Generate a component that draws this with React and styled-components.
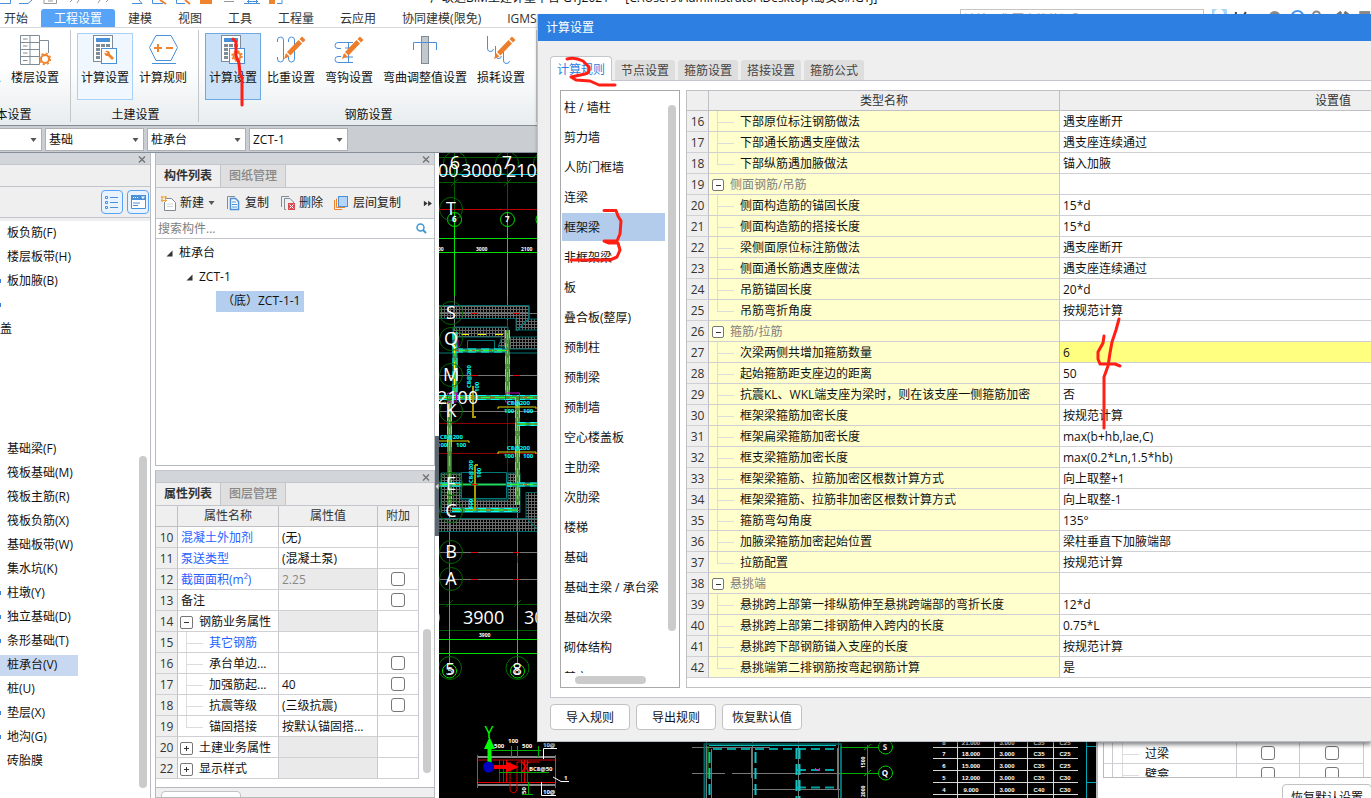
import React from 'react';
import styled, { createGlobalStyle, css } from 'styled-components';

const Global = createGlobalStyle`
  * { box-sizing: border-box; }
  html, body { margin: 0; padding: 0; }
  body {
    font-family: "Open Sans", "Noto Sans CJK SC", sans-serif;
    font-size: 12px;
    line-height: 16px;
    color: #111;
    background: #fff;
    overflow: hidden;
  }
  button, input, select { font: inherit; color: inherit; }
  button { padding: 0; margin: 0; cursor: default; }
`;

const App = styled.div`
  position: relative;
  display: flex;
  flex-direction: column;
  width: 100%;
  height: 100vh;
  overflow: hidden;
`;

/* ---------- Title strip and menu ---------- */
const TitleStrip = styled.header`
  display: flex;
  align-items: flex-end;
  flex: none;
  height: 9px;
  overflow: hidden;
  white-space: pre;
`;
const QuickIcons = styled.div`
  display: flex;
  flex: none;
  width: 430px;
  height: 9px;
`;
const AppTitle = styled.span`
  line-height: 18px;
  padding-bottom: 2px;
`;
const MenuBar = styled.div`
  display: flex;
  flex: none;
  height: 19px;
  border-bottom: 1px solid #d5d7da;
  overflow: hidden;
`;
const MenuTabs = styled.nav`
  display: flex;
  margin-left: -9px;
  flex: 1;
`;
const MenuTab = styled.button`
  border: 0;
  padding: 0 13px;
  height: 19px;
  line-height: 19px;
  white-space: nowrap;
  border-radius: 3px 3px 0 0;
  background: ${p => (p.$active ? '#57a3f7' : 'transparent')};
  color: ${p => (p.$active ? '#fff' : '#333')};
`;
const MenuTools = styled.div`
  display: flex;
  flex: none;
  width: 411px;
  gap: 8px;
`;
const HelpSearch = styled.input`
  width: 245px;
  height: 20px;
  border: 1px solid #c4c4c4;
  padding: 0 3px;
  line-height: 16px;
  outline: 0;
  &::placeholder { color: #aaa; }
`;

/* ---------- Ribbon ---------- */
const Ribbon = styled.section`
  display: flex;
  flex: none;
  height: 98px;
  padding-top: 2px;
  background: linear-gradient(#fff 0%, #fff 40%, #e7ecee 100%);
  border-bottom: 1px solid #858b92;
`;
const RibbonGroup = styled.div`
  display: flex;
  flex-direction: column;
  flex: none;
  margin-left: ${p => (p.$clipped ? '-57px' : '0')};
  padding: 3px 7px 0 6px;
  border-right: 1px solid #c3c7ca;
  height: 92px;
`;
const RibbonItems = styled.div`
  display: flex;
  gap: 2px;
`;
const RibbonButton = styled.button`
  display: flex;
  flex-direction: column;
  align-items: center;
  gap: 4px;
  width: ${p => (p.$wide ? '92px' : '56px')};
  height: 67px;
  white-space: nowrap;
  border: 1px solid ${p => ({ hover: '#a9d1f8', on: '#6ea9e6' }[p.$state] || 'transparent')};
  background: ${p => ({ hover: '#f0f7ff', on: '#cbe1f8' }[p.$state] || 'transparent')};
`;
const GroupLabel = styled.div`
  text-align: center;
  margin-top: 7px;
  padding-left: 3px;
`;

/* ---------- Combo bar ---------- */
const ComboBar = styled.div`
  display: flex;
  flex: none;
  gap: 3px;
  height: 27px;
  padding-top: 2px;
  margin-left: -57px;
  background: #cacdd2;
  border-bottom: 1px solid #878f98;
`;
const ComboBox = styled.div`
  display: flex;
  align-items: center;
  width: 99px;
  height: 23px;
  padding-right: 4px;
  border: 1px solid #aeb0b4;
  background: #fff;
`;
const Combo = styled.select`
  appearance: none;
  flex: 1;
  min-width: 0;
  height: 20px;
  border: 0;
  outline: 0;
  padding: 0 3px;
  background: transparent;
`;

/* ---------- Work area ---------- */
const Work = styled.main`
  display: flex;
  flex: 1;
  min-height: 0;
`;
const NavPane = styled.aside`
  display: flex;
  flex-direction: column;
  flex: none;
  width: 151px;
  border-right: 1px solid #b9bcc2;
  background: #fff;
`;
const PaneBar = styled.div`
  display: flex;
  flex: none;
  align-items: center;
  justify-content: flex-end;
  height: 12px;
  padding: 1px 4px 0 0;
  background: #d2d5da;
  border-bottom: 1px solid #c2c5ca;
`;
const CloseButton = styled.button`
  display: flex;
  border: 0;
  background: transparent;
`;
const NavHead = styled.div`
  flex: none;
  height: 22px;
  background: #efefef;
  border-bottom: 1px solid #c2c5ca;
`;
const NavTools = styled.div`
  display: flex;
  flex: none;
  align-items: center;
  justify-content: flex-end;
  gap: 4px;
  height: 31px;
  padding-right: 1px;
  background: #efefef;
  border-bottom: 1px solid #c2c5ca;
`;
const ToolToggle = styled.button`
  display: flex;
  align-items: center;
  justify-content: center;
  width: 22px;
  height: 24px;
  border: 1px solid #57a3f7;
  border-radius: 4px;
  background: #e8f3ff;
`;
const NavBody = styled.div`
  display: flex;
  flex: 1;
  min-height: 0;
  border-top: 3px solid #efefef;
  overflow: hidden;
`;
const NavList = styled.ul`
  flex: 1;
  list-style: none;
  margin: 0;
  padding: 0;
`;
const NavItem = styled.li`
  display: flex;
  align-items: center;
  gap: 6px;
  height: 24px;
  white-space: nowrap;
  span {
    display: flex;
    align-items: center;
    height: 21px;
    ${p => p.$selected && css`background: #c7d8f0; padding-right: 21px; box-shadow: -7px 0 #c7d8f0;`}
  }
`;
const NavMark = styled.i`
  flex: none;
  width: 1px;
  height: 4px;
  background: ${p => (p.$on ? '#3d7fd0' : 'transparent')};
`;
const Thumb = styled.div`
  flex: none;
  width: ${p => (p.$horizontal ? '71px' : '8px')};
  height: ${p => (p.$horizontal ? '8px' : 'auto')};
  margin: ${p => p.$inset};
  border-radius: 4px;
  background: #cbcbcb;
`;

const MiddleColumn = styled.div`
  display: flex;
  flex-direction: column;
  flex: none;
  width: 280px;
  margin-left: 4px;
`;
const Pane = styled.section`
  display: flex;
  flex-direction: column;
  flex: none;
  min-height: 0;
  border: 1px solid #b6b9be;
  border-top: 0;
  background: #fff;
`;
const LowerPane = styled(Pane)`
  flex: 1;
  margin-top: 4px;
  border-top: 1px solid #c2c5ca;
`;
const PaneTabs = styled.div`
  display: flex;
  flex: none;
  height: 23px;
  background: #efefef;
  border-bottom: 1px solid #c2c5ca;
`;
const PaneTab = styled.button`
  width: 65px;
  height: 22px;
  border: 0;
  border-right: 1px solid #c2c5ca;
  font-weight: ${p => (p.$active ? '700' : '500')};
  color: ${p => (p.$active ? '#333' : '#888')};
  background: ${p => (p.$active ? '#efefef' : '#dfdfdf')};
`;
const PaneTools = styled.div`
  display: flex;
  flex: none;
  align-items: center;
  height: 31px;
  padding: 0 2px 0 5px;
  background: #efefef;
  border-bottom: 1px solid #c2c5ca;
`;
const PaneTool = styled.button`
  display: flex;
  align-items: center;
  gap: 4px;
  margin-right: 11px;
  border: 0;
  background: transparent;
  color: #222;
  white-space: nowrap;
`;
const SearchRow = styled.label`
  display: flex;
  flex: none;
  align-items: center;
  height: 20px;
  padding-right: 7px;
  border-bottom: 1px solid #c2c5ca;
`;
const SearchInput = styled.input`
  flex: 1;
  min-width: 0;
  border: 0;
  outline: 0;
  padding: 0 2px;
  height: 18px;
  &::placeholder { color: #808080; }
`;
const Tree = styled.div`
  height: 226px;
  padding-top: 2px;
`;
const TreeRow = styled.div`
  display: flex;
  align-items: center;
  gap: 6px;
  height: 24px;
  padding-left: ${p => 10 + p.$depth * 20}px;
`;
const TreeChosen = styled.span`
  padding: 2px 4px 3px 6px;
  background: #b3ceef;
`;
const PropertyArea = styled.div`
  display: flex;
  flex: none;
  background: #fff;
  height: 281px;
`;
const PropertyFooter = styled.div`
  flex: 1;
  min-height: 0;
  padding: 3px 5px;
  background: #efefef;
  border-top: 1px solid #b6b9be;
  overflow: hidden;
`;

/* ---------- Data tables ---------- */
const Grid = styled.table`
  flex: none;
  align-self: flex-start;
  table-layout: fixed;
  border-collapse: separate;
  border-spacing: 0;
  width: ${p => p.$width}px;
  th, td {
    padding: 0;
    border-right: 1px solid #c9c9cf;
    border-bottom: 1px solid #cfcfd4;
    height: 21px;
    overflow: hidden;
    white-space: nowrap;
    font-weight: 400;
    line-height: 18px;
    text-align: left;
  }
  thead th { background: #efefef; color: #333; text-align: center; border-color: #bfbfc4; height: ${p => p.$head}px; }
  tbody th { background: #efefef; color: #333; text-align: center; border-right-color: #bfbfc4; padding-top: 2px; }
`;
const Cell = styled.div`
  display: flex;
  align-items: center;
  height: 20px;
  padding: 2px 0 0 ${p => p.$pad || 3}px;
  color: ${p => p.$tone || '#111'};
`;
const NameCell = styled.td`
  background: ${p => (p.$yellow ? '#ffffce' : '#fff')};
`;
const ValueCell = styled.td`
  background: ${p => ({ locked: '#eaeaea', hot: '#ffff80' }[p.$kind] || '#fff')};
`;
const Guide = styled.span`
  flex: none;
  width: 17px;
  height: 22px;
  margin-right: 6px;
  background:
    linear-gradient(#dcdcdc, #dcdcdc) 0 0 / 1px ${p => (p.$last ? '50%' : '100%')} no-repeat,
    linear-gradient(#dcdcdc, #dcdcdc) 0 50% / 17px 1px no-repeat;
`;
const Expander = styled.button`
  display: flex;
  align-items: center;
  justify-content: center;
  flex: none;
  width: ${p => p.$size}px;
  height: ${p => p.$size}px;
  margin-right: 6px;
  border: 1px solid #777;
  border-radius: 2px;
  background: #fff;
`;
const Tick = styled.input.attrs({ type: 'checkbox' })`
  appearance: none;
  display: block;
  width: 14px;
  height: 14px;
  margin: 0 auto;
  border: 1px solid #777;
  border-radius: 3px;
  background: #fff;
`;

/* ---------- Drawing area ---------- */
const Splitter = styled.div`
  display: flex;
  flex: none;
  width: 4px;
  align-items: flex-start;
  padding-top: 283px;
`;
const SplitterGrip = styled.button`
  display: flex;
  align-items: center;
  width: 4px;
  height: 100px;
  border: 0;
  background: #5c6771;
`;
const Canvas = styled.div`
  flex: 1;
  min-width: 0;
  overflow: hidden;
  background: #000;
  svg { display: block; }
`;
const SidePane = styled.aside`
  display: flex;
  flex-direction: column;
  justify-content: flex-end;
  flex: none;
  width: 275px;
  padding-left: 5px;
  background: #fff;
  border-left: 2px solid #b9b9b9;
  overflow: hidden;
`;
const SideScroll = styled.div`
  display: flex;
  flex: none;
  align-items: flex-start;
  height: 35px;
  border: 1px solid #bbb;
  border-width: 0 0 1px 1px;
  overflow: hidden;
`;
const SideFooter = styled.div`
  display: flex;
  justify-content: flex-end;
  flex: none;
  height: 20px;
  padding-top: 6px;
  margin-right: -1px;
  overflow: hidden;
`;

/* ---------- Dialog ---------- */
const Dialog = styled.section`
  position: absolute;
  top: 14px;
  left: 538px;
  right: 0;
  background: #efefef;
  border-bottom: 1px solid #b8bcc6;
  box-shadow: -1px 0 #b9c2d8, 0 3px 4px rgba(0, 0, 0, 0.45);
  overflow: hidden;
`;
const DialogTitle = styled.h1`
  margin: 0;
  padding-left: 8px;
  height: 27px;
  font-size: 12px;
  line-height: 28px;
  font-weight: 400;
  color: #fff;
  background: #2d7fe1;
`;
const DialogTabs = styled.div`
  display: flex;
  align-items: flex-end;
  gap: 3px;
  padding: 15px 0 0 12px;
`;
const DialogTab = styled.button`
  border: 0;
  width: 60px;
  height: 20px;
  padding-top: 2px;
  color: #444;
  background: #dedede;
  border-radius: 3px 3px 0 0;
  ${p => p.$active && css`
    position: relative;
    z-index: 1;
    width: 62px;
    height: 25px;
    margin-bottom: -1px;
    color: #2d7fe1;
    background: #fff;
    border: 1px solid #c3c6cc;
    border-bottom: 0;
    border-radius: 4px 4px 0 0;
  `}
`;
const DialogPanel = styled.div`
  display: flex;
  gap: 6px;
  margin-left: 12px;
  padding: 9px 0 9px 9px;
  background: #fff;
  border: 1px solid #c3c6cc;
  border-right: 0;
  overflow: hidden;
`;
const RuleBox = styled.div`
  display: flex;
  flex-direction: column;
  flex: none;
  width: 120px;
  height: 598px;
  border: 1px solid #a9a9ac;
`;
const RuleView = styled.div`
  display: flex;
  flex: 1;
  min-height: 0;
  overflow: hidden;
`;
const RuleList = styled.ul`
  display: flex;
  flex-direction: column;
  flex: 1;
  gap: 2px;
  list-style: none;
  margin: 0;
  padding: 2px 1px;
`;
const RuleItem = styled.li`
  flex: none;
  width: 103px;
  height: 28px;
  padding-left: 2px;
  line-height: 29px;
  white-space: nowrap;
  background: ${p => (p.$selected ? '#b3ccec' : 'transparent')};
`;
const RuleTable = styled.div`
  flex: 1;
  min-width: 0;
  border: 1px solid #bfbfc4;
  border-right: 0;
  overflow: hidden;
`;
const DialogFooter = styled.footer`
  display: flex;
  gap: 6px;
  padding: 6px 12px 11px;
`;
const PlainButton = styled.button`
  flex: none;
  width: ${p => p.$width || 80}px;
  height: 26px;
  padding-top: 1px;
  border: 1px solid #c2c2c2;
  border-radius: 4px;
  background: #fff;
  white-space: nowrap;
`;
const Markup = styled.svg`
  position: absolute;
  top: 0;
  left: 0;
  z-index: 2;
  pointer-events: none;
`;

/* ---------- Icons ---------- */
const B = '#4a90d9', O = '#ee8330', G = '#7f8b96';

const Pencil = () => (
  <g fill="#ee7d2b" stroke="none">
    <path d="M9 25 L11 19 L14.500 22.500 Z" />
    <path d="M12 18 L23.500 6 L27 9.500 L15.500 21.500 Z" />
    <path d="M24.500 5 L27 2.500 L30.500 6 L28 8.500 Z" />
  </g>
);
const Calculator = () => (
  <g>
    <rect x="4.500" y="1.500" width="19" height="26" fill="#fff" stroke={G} />
    <rect x="7" y="4" width="14" height="4" fill={B} />
    <g fill={G}>
      {[10, 14, 18, 22].map(y => [7, 12, 17].map(x => <rect key={`${x}${y}`} x={x} y={y} width="4" height="3" />))}
    </g>
    <rect x="12.500" y="14.500" width="15" height="15" fill="#fff" stroke={B} />
  </g>
);
const ribbonArt = {
  info: <rect x="4" y="2" width="20" height="26" fill="none" stroke={G} />,
  floor: (
    <g fill="none" stroke={G}>
      <path d="M1.500 1.500H20.500V30.500H1.500ZM11 1.500V30.500M1.500 8.500H20M1.500 15.500H20M1.500 22.500H20M4 5H8.500M4 12H8.500M4 19H8.500M4 26.500H8.500M20.500 6.500H29.500V19" />
      <circle cx="26" cy="25" r="4" fill="#fff" stroke={O} strokeWidth="2" />
      <circle cx="26" cy="25" r="5.500" stroke={O} strokeWidth="1.500" strokeDasharray="2.100 2.220" />
    </g>
  ),
  calc: (
    <g>
      <Calculator />
      <path d="M16 17.500a3 3 0 0 1 5 2.500l4 4-2 2-4-4a3 3 0 0 1-3.500-3.500l2 1 1-1z" fill={O} />
    </g>
  ),
  calcGear: (
    <g>
      <Calculator />
      <circle cx="20" cy="22" r="3.500" fill="none" stroke={O} strokeWidth="2" />
      <circle cx="20" cy="22" r="5" fill="none" stroke={O} strokeWidth="1.500" strokeDasharray="2 1.930" />
    </g>
  ),
  rule: (
    <g fill="none" stroke={B}>
      <path d="M2.500 13.500L9 1.500H24L30.500 13.500L24 26.500H9ZM5 29.500H29" />
      <path d="M7 14H15M11 10V18M19 14H26" stroke={O} strokeWidth="2" />
    </g>
  ),
  weight: (
    <g fill="none" stroke={B}>
      <path d="M2.500 8V6a3 3 0 0 1 6 0V25a3 3 0 0 1-6 0V23M13.500 8V6a3 3 0 0 1 6 0V25a3 3 0 0 1-6 0V23" />
      <Pencil />
    </g>
  ),
  hook: (
    <g fill="none" stroke={B}>
      <path d="M20 8.500H5a3 3 0 0 0 0 6H8M8 22.500H5a3 3 0 0 0 0 6H20M15.500 8V28M12 14H20M12 23H20" />
      <Pencil />
    </g>
  ),
  bend: (
    <g fill="none" stroke={B}>
      <rect x="12.500" y="2.500" width="7" height="27" fill="#c3c8cc" stroke={G} />
      <path d="M4.500 16V8.500H27.500V16" />
    </g>
  ),
  loss: (
    <g fill="none" stroke={B}>
      <path d="M2.500 2V14a3 3 0 0 0 6 1M10.500 12V21a3 3 0 0 0 6 1M18.500 18V26a3 3 0 0 0 6 1" />
      <Pencil />
    </g>
  ),
};
const RibbonIcon = ({ name }) => <svg width="32" height="32" viewBox="0 0 32 32" aria-hidden="true">{ribbonArt[name]}</svg>;
const Down = () => <svg width="7" height="4" viewBox="0 0 7 4" aria-hidden="true"><path d="M0.500 0H6.500L3.500 4Z" fill="#555" /></svg>;
const CloseIcon = () => <svg width="8" height="7" viewBox="0 0 8 7"><path d="M1 0.500L7 6.500M7 0.500L1 6.500" stroke="#777" strokeWidth="1.500" /></svg>;

const toolArt = {
  add: <g><path d="M4.500 2.500H10.500L14.500 6.500V14.500H3.500V6" fill="#fff" stroke={G} /><path d="M6 8H12M6 10.500H12" stroke="#cfd4d8" /><path d="M0 1H6M0 4.500H6M1 0V6M4.500 0V6" stroke="#f0a23c" strokeWidth="1.200" /></g>,
  copy: <g fill="none"><path d="M1.500 13V0.500H9" stroke={G} /><path d="M4.500 2.500H9.500L12.500 5.500V13.500H4.500Z" fill="#fff" stroke={B} strokeWidth="1.500" /><path d="M6 6H10M6 8.500H11M6 11H11" stroke={B} /></g>,
  remove: <g fill="none"><path d="M1.500 11V0.500H9M6 13.500H4.500V2.500H10L13.500 6V7" stroke={G} /><rect x="8" y="7" width="7" height="7" fill="#d84b50" /><path d="M9.500 8.500L13.500 12.500M13.500 8.500L9.500 12.500" stroke="#fff" /></g>,
  layers: <g fill="none"><path d="M0.500 4V13.500H8M2.500 2.500V11.500H11" stroke={O} /><rect x="4.500" y="0.500" width="9" height="10" fill="#b6d5fb" stroke={B} /></g>,
};
const ToolIcon = ({ name }) => <svg width="15" height="15" viewBox="0 0 15 15" aria-hidden="true">{toolArt[name]}</svg>;
const Sign = ({ plus }) => <svg width="7" height="7" viewBox="0 0 7 7"><path d={plus ? 'M1 3.500H6M3.500 1V6' : 'M1 3.500H6'} stroke="#333" /></svg>;

/* ---------- Data ---------- */
const menus = ['开始', '工程设置', '建模', '视图', '工具', '工程量', '云应用', '协同建模(限免)', 'IGMS'];
const ribbon = [
  { label: '基本设置', clipped: true, items: [['info', '工程信息'], ['floor', '楼层设置']] },
  { label: '土建设置', items: [['calc', '计算设置', 'hover'], ['rule', '计算规则']] },
  { label: '钢筋设置', items: [['calcGear', '计算设置', 'on'], ['weight', '比重设置'], ['hook', '弯钩设置'], ['bend', '弯曲调整值设置', '', true], ['loss', '损耗设置']] },
];
const navItems = [
  ['板负筋(F)'], ['楼层板带(H)'], ['板加腋(B)', 1], ['', 1], ['盖'], [''], [''], [''], [''],
  ['基础梁(F)'], ['筏板基础(M)'], ['筏板主筋(R)'], ['筏板负筋(X)'], ['基础板带(W)'], ['集水坑(K)'],
  ['柱墩(Y)', 1], ['独立基础(D)', 1], ['条形基础(T)', 1], ['桩承台(V)'], ['桩(U)'], ['垫层(X)', 1], ['地沟(G)', 1], ['砖胎膜'],
];
const props = [
  { n: 10, name: '混凝土外加剂', value: '(无)', blue: true },
  { n: 11, name: '泵送类型', value: '(混凝土泵)', blue: true },
  { n: 12, name: '截面面积(m²)', value: '2.25', blue: true, locked: true, tick: true },
  { n: 13, name: '备注', tick: true },
  { n: 14, name: '钢筋业务属性', group: 'open', locked: true },
  { n: 15, name: '其它钢筋', blue: true, child: true },
  { n: 16, name: '承台单边...', child: true, tick: true },
  { n: 17, name: '加强筋起...', value: '40', child: true, tick: true },
  { n: 18, name: '抗震等级', value: '(三级抗震)', child: true, tick: true },
  { n: 19, name: '锚固搭接', value: '按默认锚固搭...', child: true, last: true },
  { n: 20, name: '土建业务属性', group: 'shut', locked: true },
  { n: 22, name: '显示样式', group: 'shut', locked: true },
];
const ruleKinds = ['柱 / 墙柱', '剪力墙', '人防门框墙', '连梁', '框架梁', '非框架梁', '板', '叠合板(整厚)', '预制柱', '预制梁', '预制墙', '空心楼盖板', '主肋梁', '次肋梁', '楼梯', '基础', '基础主梁 / 承台梁', '基础次梁', '砌体结构', '其它'];
const rules = [
  ['下部原位标注钢筋做法', '遇支座断开'], ['下部通长筋遇支座做法', '遇支座连续通过'], ['下部纵筋遇加腋做法', '锚入加腋'],
  ['侧面钢筋/吊筋'],
  ['侧面构造筋的锚固长度', '15*d'], ['侧面构造筋的搭接长度', '15*d'], ['梁侧面原位标注筋做法', '遇支座断开'],
  ['侧面通长筋遇支座做法', '遇支座连续通过'], ['吊筋锚固长度', '20*d'], ['吊筋弯折角度', '按规范计算'],
  ['箍筋/拉筋'],
  ['次梁两侧共增加箍筋数量', '6'], ['起始箍筋距支座边的距离', '50'], ['抗震KL、WKL端支座为梁时，则在该支座一侧箍筋加密', '否'],
  ['框架梁箍筋加密长度', '按规范计算'], ['框架扁梁箍筋加密长度', 'max(b+hb,lae,C)'], ['框支梁箍筋加密长度', 'max(0.2*Ln,1.5*hb)'],
  ['框架梁箍筋、拉筋加密区根数计算方式', '向上取整+1'], ['框架梁箍筋、拉筋非加密区根数计算方式', '向上取整-1'],
  ['箍筋弯勾角度', '135°'], ['加腋梁箍筋加密起始位置', '梁柱垂直下加腋端部'], ['拉筋配置', '按规范计算'],
  ['悬挑端'],
  ['悬挑跨上部第一排纵筋伸至悬挑跨端部的弯折长度', '12*d'], ['悬挑跨上部第二排钢筋伸入跨内的长度', '0.75*L'],
  ['悬挑跨下部钢筋锚入支座的长度', '按规范计算'], ['悬挑端第二排钢筋按弯起钢筋计算', '是'],
];

/* ---------- CAD drawing ---------- */
const axisMarks = [['6', 455, 163], ['7', 507, 163], ['8', 545, 163], ['T', 451, 209], ['S', 451, 313], ['Q', 451, 339], ['M', 451, 375], ['K', 451, 411], ['E', 451, 484], ['C', 451, 511], ['B', 451, 552], ['A', 451, 579]];
const levels = [['8', '21.000', '3.000', 'C35', 'C25', 742], ['7', '18.000', '3.000', 'C35', 'C25', 753], ['6', '15.000', '3.000', 'C35', 'C25', 765], ['5', '12.000', '3.000', 'C35', 'C30', 777], ['4', '9.000', '3.000', 'C40', 'C30', 789], ['3', '6.000', '3.000', 'C40', 'C30', 800]];
const Beam = ({ d, w = 5 }) => (
  <g fill="none">
    <path d={d} stroke="#00a8a8" strokeWidth={w} />
    <path d={d} stroke="#00ffff" strokeWidth={w} strokeDasharray="8 5" />
    <path d={d} stroke="#4c8f3c" strokeWidth={w - 2} />
    <path d={d} stroke="#2bff2b" strokeWidth="1" strokeDasharray="10 4" />
    <path d={d} stroke="#b06020" strokeWidth="1" strokeDasharray="3 14" />
  </g>
);
const RebarTag = ({ x, y }) => (
  <g>
    <path d={`M${x} ${y + 2}V${y}H${x + 38}V${y + 2}`} fill="none" stroke="#e0d800" />
    <g fill="#00ffff" fontSize="6" fontWeight="700">
      <text x={x + 9} y={y - 2}>C8@200</text><text x={x + 6} y={y + 6}>100</text><text x={x + 25} y={y + 6}>100</text>
    </g>
  </g>
);
const Drawing = () => (
  <svg width="657" height="645" viewBox="439 153 657 645" fontFamily="Open Sans, sans-serif">
    <defs>
      <pattern id="mesh" width="3" height="3" patternUnits="userSpaceOnUse">
        <path d="M0 0.500H3M0.500 0V3" stroke="#6a6a6a" strokeWidth="1" />
      </pattern>
    </defs>
    <g fill="none" stroke="#005c00">
      <path d="M439 157.500H539M439 182.500H539M454.500 153V217M507.500 153V217M451 186L458 179M504 186L511 179" />
      <path d="M439 604.500H539M439 630.500H539M446 607L453 600M514 607L521 600" />
    </g>
    <path d="M439 174.500H539" stroke="#00c8e8" />
    <path d="M439 209.500H539" stroke="#c00000" />
    <g fill="none" stroke="#00e000">
      <path d="M439 238.500H539M439 252.500H539M454.500 212V296M507.500 212V296M439 639.500H539M439 653.500H539M449.500 596V665M517.500 596V665" />
      <circle cx="454.500" cy="219.500" r="7" /><circle cx="507.500" cy="219.500" r="7" /><circle cx="543" cy="219.500" r="7" />
      <circle cx="449.500" cy="671" r="7" /><circle cx="517.500" cy="671" r="7" />
    </g>
    <g stroke="#777" fill="none">
      <path d="M454.500 296V330M507.500 296V330M439 375.500H539M439 411.500H539M439 552.500H539M439 579.500H539M449.500 512V600M517.500 512V600" />
    </g>
    <g stroke="#8b0000" fill="none"><path d="M439 423.500H539M439 453.500H539M507.500 400V480" /></g>
    <g fill="url(#mesh)" stroke="#006c6c">
      <path d="M439 305.500H529V318L516 331V318.500H439Z" />
      <path d="M529 319H540V330H517Z" />
      <path d="M453 327H508V347H498L502 337H453Z" />
      <path d="M508 337H540V349H508Z" />
      <path d="M439 518.500H540V531.500H439Z" />
      <path d="M441 473H461V500H508V473H520V512.500H441Z" />
      <path d="M526 492.500H540V531H540L526 518Z" />
    </g>
    <path d="M439 313.500H539" stroke="#777" />
    <g fill="none" stroke="#007878"><path d="M467.500 340.500H494.500V350.500H467.500ZM439 353H453M510 353H539M529 306V319L517 331M526 518L539 531" /></g>
    <Beam d="M455 332V397" /><Beam d="M507.500 330V397" /><Beam d="M455 350.500H507" w={4} />
    <path d="M454.500 345V396M461 334.500H505" stroke="#ffff00" strokeDasharray="8 9" />
    <Beam d="M439 397.500H539" /><Beam d="M517.500 397V505" /><Beam d="M449.500 400V505" /><Beam d="M517 424H539" w={4} /><Beam d="M439 484.500H539" w={4} /><Beam d="M452 510H518" w={4} />
    <path d="M461.500 472.500H506.500V498.500H461.500Z" fill="#000" stroke="#007878" />
    <path d="M461 484.500H506" stroke="#20d860" strokeWidth="2" />
    <g fill="none" stroke="#c000c0"><path d="M447.500 393V402H456.500V393ZM505.500 393V402H519.500V393ZM509.500 340V352M447.500 452V480M451.500 452V480M453 340H458V352" /></g>
    <path d="M473 386V416M472 417H476M475 465V510M475 465H478" stroke="#a89c00" fill="none" strokeWidth="2" />
    <g fill="#00ffff" fontSize="6" fontWeight="700">
      <text transform="translate(471 388) rotate(-90)">C8@200</text><text transform="translate(479 392) rotate(-90)">100</text>
      <text transform="translate(473 483) rotate(-90)">C8@200</text><text transform="translate(481 478) rotate(-90)">100</text><text transform="translate(473 509) rotate(-90)">100</text>
    </g>
    <RebarTag x={498} y={407} /><RebarTag x={498} y={452} /><RebarTag x={431} y={441} />
    <path d="M471 313.500H478M513 313.500H520M471 375.500H478M513 375.500H520M471 484.500H478M471 552.500H478M513 552.500H520M471 579.500H478M513 579.500H520M449.500 556V563M517.500 556V563M507.500 320V330" stroke="#e80000" />
    {axisMarks.map(([t, x, y]) => (
      <g key={t}>
        <circle cx={x} cy={y} r="11.500" fill="none" stroke="#006800" />
        <text x={x} y={y + 6} fontSize="18" fill="#fff" textAnchor="middle">{t}</text>
      </g>
    ))}
    <g fill="#fff" fontSize="18">
      <text x="438" y="177">00</text><text x="461" y="177">3000</text><text x="506" y="177">2100</text>
      <text x="437" y="404">2100</text><text x="463" y="624">3900</text><text x="524" y="624">300</text><text x="430" y="624">0</text>
    </g>
    <g fill="#fff" fontSize="5" fontWeight="700">
      <text x="476" y="251">3000</text><text x="521" y="251">2100</text><text x="438" y="251">00</text><text x="479" y="637">3900</text>
      <text x="452" y="222" fontSize="8">6</text><text x="505" y="222" fontSize="8">7</text>
    </g>
    <g fill="none" stroke="#007000"><circle cx="450" cy="668" r="11.500" /><circle cx="517.500" cy="668" r="11.500" /></g>
    <g fill="#fff" textAnchor="middle">
      <text x="450" y="675" fontSize="17">5</text><text x="450" y="674" fontSize="9">5</text>
      <text x="517" y="675" fontSize="17">8</text><text x="517" y="674" fontSize="9">8</text>
    </g>

    {/* section detail with the origin marker */}
    <g fill="none">
      <path d="M477 757H556M477 785H556" stroke="#8a8a8a" strokeWidth="2" />
      <path d="M478 760H555M478 782.500H555M499.500 760V782M503.500 760V782M506.500 760V782M521.500 760V782M524.500 760V782M527.500 760V782M510 762V790Q513 796 517 790V762H539" stroke="#e00000" />
      <path d="M477.500 755V788M555.500 755V788M492 750.500H541M511.500 746V757M517.500 746V757M538.500 746V757M499 772.500H549M528.500 782V795M522 794.500H533" stroke="#00b000" />
      <path d="M557 748.500H543.500V759M541.500 782V795.500H556M553 777L561 781.500H569" stroke="#fff" />
      <path d="M489.500 767V745" stroke="#00ff00" strokeWidth="4" />
      <path d="M494 767H507" stroke="#ff0000" strokeWidth="4" />
    </g>
    <path d="M484 749L489.500 737L495 749Z" fill="#00ff00" /><path d="M506 761.500L519 767L506 772.500Z" fill="#f00" />
    <circle cx="488.500" cy="767" r="5.500" fill="#0000c0" />
    <text x="489" y="738" fontSize="16" fill="#00ff00" textAnchor="middle">Y</text>
    <text x="525" y="772" fontSize="14" fill="#f00" textAnchor="middle">X</text>
    <g fill="#fff" fontSize="6" fontWeight="700">
      <text x="494" y="748">500</text><text x="508" y="743">100</text><text x="522" y="748">500</text><text x="543" y="747">10@</text>
      <text x="529" y="771">BC8@50</text><text x="543" y="794">10@</text><text x="564" y="780">1</text><text transform="translate(526 794) rotate(-90)">50</text>
    </g>

    {/* lower floor plan */}
    <g fill="none">
      <path d="M692 747.500H770M692 773.500H725M732 773.500H840M752 789.500H840M706.500 742V798M752.500 742V798M798.500 742V798M838.500 742V798" stroke="#777" />
      <path d="M704.500 798V744H841V798" stroke="#007070" strokeWidth="2" />
      <path d="M709 745.500H836" stroke="#00e5e5" />
      <path d="M713 749H836M797 770H838M797 787.500H838" stroke="#00a0a0" strokeWidth="2" strokeDasharray="9 5" />
      <path d="M709.500 752V798M755.500 752V798M796.500 748V798M799.500 748V798" stroke="#00caca" strokeDasharray="11 5" strokeWidth="2" />
      <path d="M708 746V778M711.500 749V798M751.500 748V778M837.500 748V790" stroke="#00c800" strokeWidth="1" />
      <path d="M840 747.500H878M840 773.500H878M867.500 745V798M864 750L871 744M864 776L871 770" stroke="#00b000" />
      <circle cx="885.500" cy="747" r="7" stroke="#00d000" /><circle cx="885.500" cy="773" r="7" stroke="#00d000" />
      <path d="M815 768L818 771L820 768" stroke="#e020e0" />
    </g>
    <g fill="#fff" fontSize="8" fontWeight="700" textAnchor="middle"><text x="885" y="750">S</text><text x="885" y="776">Q</text></g>
    <g fill="#fff" fontSize="5" fontWeight="700"><text transform="translate(865 768) rotate(-90)">1500</text><text transform="translate(865 797) rotate(-90)">2000</text></g>

    {/* level schedule */}
    <g fill="none" stroke="#d8d8d8"><path d="M933 747.500H1078M933 758.500H1078M933 770.500H1078M933 782.500H1078M933 794.500H1078M957.500 742V798M994.500 742V798M1027.500 742V798M1053.500 742V798" /></g>
    <g fill="#fff" fontSize="6" fontFamily="Liberation Sans, sans-serif" fontWeight="700" textAnchor="middle">
      {levels.map(([n, h, s, a, b, y]) => (
        <g key={n}><text x="944" y={y + 3}>{n}</text><text x="971" y={y + 3}>{h}</text><text x="1007" y={y + 3}>{s}</text><text x="1039" y={y + 3}>{a}</text><text x="1065" y={y + 3}>{b}</text></g>
      ))}
    </g>
    <path d="M1086.500 742V798M1086 746.500H1096M1086 782.500H1096" stroke="#00a8b8" />
  </svg>
);

const QuickArt = () => (
  <svg width="430" height="9" viewBox="0 0 430 9" fill="none" aria-hidden="true">
    <path d="M0 3.500H10.500V0M19 3.500H28L32 0" stroke={B} />
    <path d="M44 0V3.500H56.500V0M48 1H53M70 2L72 0M77 3L79 0M98 3L100 0M106 2L108 0M224 1.500H234" stroke="#999" />
    <path d="M132 3.500H142L139 0M152.500 0V3.500H163M176.500 0V3.500H185M247 1.500H258M244 3.500H260M248.500 0V4M256.500 0V4" stroke={B} />
    <path d="M160 0L166 4M185 0L190 4M200 3H212M200 1H212" stroke={O} strokeWidth="2" />
    <path d="M269 0H275V4H269Z" fill={O} /><path d="M277 3.500H282V0" stroke={B} />
  </svg>
);
const UserArt = () => (
  <svg width="160" height="19" viewBox="1213 9 160 19" fill="none" aria-hidden="true">
    <rect x="1212" y="9" width="16" height="16" fill="#a9d5fb" /><circle cx="1220" cy="14" r="5" fill="#fff" />
    <path d="M1237 12V17M1247 12L1244 17" stroke="#444" strokeWidth="2" />
    <circle cx="1276" cy="17" r="6" fill="#8b8b8b" />
    <circle cx="1299" cy="17" r="6" stroke="#4a97ee" strokeWidth="2" />
    <circle cx="1318" cy="15" r="3.500" stroke="#888" strokeWidth="2" />
    <path d="M1339 15L1343 12M1346 12L1350 15" stroke="#777" strokeWidth="3" />
    <rect x="1361" y="11" width="11" height="8" fill="#8b8b8b" />
  </svg>
);

const sideRows = ['过梁', '壁龛'];

export default function BimWorkspace() {
  return (
    <App>
      <Global />
      <TitleStrip>
        <QuickIcons><QuickArt /></QuickIcons>
        <AppTitle>{'广联达BIM土建计量平台 GTJ2021  -  [C:\\Users\\Administrator\\Desktop\\蜀安8#.GTJ]'}</AppTitle>
      </TitleStrip>
      <MenuBar>
        <MenuTabs>{menus.map((m, i) => <MenuTab key={m} $active={i === 1}>{m}</MenuTab>)}</MenuTabs>
        <MenuTools>
          <HelpSearch aria-label="搜索帮助" placeholder="请输入您要查找的问题" />
          <UserArt />
        </MenuTools>
      </MenuBar>

      <Ribbon>
        {ribbon.map(g => (
          <RibbonGroup key={g.label} $clipped={g.clipped}>
            <RibbonItems>
              {g.items.map(([icon, label, state, wide]) => (
                <RibbonButton key={icon} $state={state} $wide={wide}><RibbonIcon name={icon} />{label}</RibbonButton>
              ))}
            </RibbonItems>
            <GroupLabel>{g.label}</GroupLabel>
          </RibbonGroup>
        ))}
      </Ribbon>

      <ComboBar>
        {[['楼层', '首层'], ['分类', '基础'], ['构件类型', '桩承台'], ['构件', 'ZCT-1']].map(([label, v]) => (
          <ComboBox key={label}><Combo aria-label={label}><option>{v}</option></Combo><Down /></ComboBox>
        ))}
      </ComboBar>

      <Work>
        <NavPane>
          <PaneBar><CloseButton aria-label="关闭"><CloseIcon /></CloseButton></PaneBar>
          <NavHead />
          <NavTools>
            <ToolToggle aria-label="列表">
              <svg width="14" height="14" viewBox="0 0 14 14" fill="none" stroke={B}><path d="M5 2.500H13M5 7.500H13M5 12.500H13M0.500 1.500H2.500V3.500H0.500ZM0.500 6.500H2.500V8.500H0.500ZM0.500 11.500H2.500V13.500H0.500Z" /></svg>
            </ToolToggle>
            <ToolToggle aria-label="面板">
              <svg width="15" height="14" viewBox="0 0 15 14" fill="none" stroke={B}><path d="M0.500 0.500H14.500V13.500H0.500Z" fill="#fff" /><path d="M0 0H15V5H0Z" fill={B} stroke="none" /><path d="M2 2.500H7" stroke="#fff" strokeDasharray="1 1" /><path d="M10 1.500H14L12 4Z" fill="#fff" stroke="none" /><path d="M2 8H9M2 10.500H7" /></svg>
            </ToolToggle>
          </NavTools>
          <NavBody>
            <NavList>
              {navItems.map(([t, mark], i) => (
                <NavItem key={i} $selected={t === '桩承台(V)'}>{t !== '盖' && <NavMark $on={mark} />}<span>{t}</span></NavItem>
              ))}
            </NavList>
            <Thumb $inset="235px 3px 10px 0" />
          </NavBody>
        </NavPane>

        <MiddleColumn>
          <Pane>
            <PaneBar><CloseButton aria-label="关闭"><CloseIcon /></CloseButton></PaneBar>
            <PaneTabs><PaneTab $active>构件列表</PaneTab><PaneTab>图纸管理</PaneTab></PaneTabs>
            <PaneTools>
              <PaneTool><ToolIcon name="add" />新建<Down /></PaneTool>
              <PaneTool><ToolIcon name="copy" />复制</PaneTool>
              <PaneTool><ToolIcon name="remove" />删除</PaneTool>
              <PaneTool><ToolIcon name="layers" />层间复制</PaneTool>
              <svg width="21" height="7" viewBox="0 0 21 7" aria-hidden="true"><path d="M12.500 0.500L16.500 3.500L12.500 6.500ZM17 0.500L21 3.500L17 6.500Z" fill="#333" /></svg>
            </PaneTools>
            <SearchRow>
              <SearchInput aria-label="搜索构件" placeholder="搜索构件..." />
              <svg width="11" height="11" viewBox="0 0 11 11" fill="none" stroke="#3f97d3" strokeWidth="1.500"><circle cx="4.500" cy="4.500" r="3.500" /><path d="M7 7L10 10" strokeWidth="2" /></svg>
            </SearchRow>
            <Tree>
              {['桩承台', 'ZCT-1'].map((t, i) => (
                <TreeRow key={t} $depth={i}><svg width="7" height="7" viewBox="0 0 7 7"><path d="M6.500 0.500V6.500H0.500Z" fill="#333" /></svg>{t}</TreeRow>
              ))}
              <TreeRow $depth={2.5}><TreeChosen>（底）ZCT-1-1</TreeChosen></TreeRow>
            </Tree>
          </Pane>

          <LowerPane>
            <PaneBar><CloseButton aria-label="关闭"><CloseIcon /></CloseButton></PaneBar>
            <PaneTabs><PaneTab $active>属性列表</PaneTab><PaneTab>图层管理</PaneTab></PaneTabs>
            <PropertyArea>
              <Grid $width={263} $head={21}>
                <colgroup><col width="22" /><col width="101" /><col width="99" /><col width="41" /></colgroup>
                <thead><tr><th></th><th>属性名称</th><th>属性值</th><th>附加</th></tr></thead>
                <tbody>
                  {props.map(r => (
                    <tr key={r.n}>
                      <th>{r.n}</th>
                      <NameCell>
                        <Cell $pad={r.child ? 8 : r.group ? 2 : 3} $tone={r.blue && '#1f62ff'}>
                          {r.child && <Guide $last={r.last} />}
                          {r.group && <Expander $size={13} aria-label={r.name}><Sign plus={r.group === 'shut'} /></Expander>}
                          {r.name}
                        </Cell>
                      </NameCell>
                      <ValueCell $kind={r.locked && 'locked'}><Cell $tone={r.locked && '#888'}>{r.value}</Cell></ValueCell>
                      <td>{r.tick && <Tick aria-label={r.name} />}</td>
                    </tr>
                  ))}
                </tbody>
              </Grid>
              <Thumb $inset="123px 0 14px 4px" />
            </PropertyArea>
            <PropertyFooter><PlainButton>参数图</PlainButton></PropertyFooter>
          </LowerPane>
        </MiddleColumn>

        <Splitter>
          <SplitterGrip aria-label="收起"><svg width="4" height="7" viewBox="0 0 4 7"><path d="M3.500 0.500V6.500L0.500 3.500Z" fill="#ddd" /></svg></SplitterGrip>
        </Splitter>
        <Canvas><Drawing /></Canvas>

        <SidePane>
          <SideScroll>
            <Grid $width={260} $head={21}>
              <colgroup><col width="9" /><col width="124" /><col width="63" /><col width="64" /></colgroup>
              <tbody>
                {sideRows.map(t => (
                  <tr key={t}>
                    <td></td>
                    <NameCell><Cell $pad={9}><Guide />{t}</Cell></NameCell>
                    <td><Tick aria-label={t} /></td>
                    <td><Tick aria-label={t} /></td>
                  </tr>
                ))}
              </tbody>
            </Grid>
          </SideScroll>
          <SideFooter><PlainButton $width={90}>恢复默认设置</PlainButton></SideFooter>
        </SidePane>
      </Work>

      <Dialog role="dialog" aria-label="计算设置">
        <DialogTitle>计算设置</DialogTitle>
        <DialogTabs>
          {['计算规则', '节点设置', '箍筋设置', '搭接设置', '箍筋公式'].map((t, i) => <DialogTab key={t} $active={i === 0}>{t}</DialogTab>)}
        </DialogTabs>
        <DialogPanel>
          <RuleBox>
            <RuleView>
              <RuleList>{ruleKinds.map(t => <RuleItem key={t} $selected={t === '框架梁'}>{t}</RuleItem>)}</RuleList>
              <Thumb $inset="14px 3px 42px 0" />
            </RuleView>
            <Thumb $horizontal $inset="3px 0 3px 14px" />
          </RuleBox>
          <RuleTable>
            <Grid $width={920} $head={20}>
              <colgroup><col width="22" /><col width="351" /><col width="547" /></colgroup>
              <thead><tr><th></th><th>类型名称</th><th>设置值</th></tr></thead>
              <tbody>
                {rules.map(([name, value], i) => {
                  const last = value && (i + 1 === rules.length || !rules[i + 1][1]);
                  return (
                    <tr key={name}>
                      <th>{i + 16}</th>
                      <NameCell $yellow>
                        <Cell $pad={value ? 8 : 3} $tone={!value && '#808080'}>
                          {value ? <Guide $last={last} /> : <Expander $size={12} aria-label={name}><Sign /></Expander>}
                          {name}
                        </Cell>
                      </NameCell>
                      <ValueCell $kind={i === 11 && 'hot'}><Cell>{value}</Cell></ValueCell>
                    </tr>
                  );
                })}
              </tbody>
            </Grid>
          </RuleTable>
        </DialogPanel>
        <DialogFooter><PlainButton>导入规则</PlainButton><PlainButton>导出规则</PlainButton><PlainButton>恢复默认值</PlainButton></DialogFooter>
      </Dialog>

      <Markup width="1371" height="798" viewBox="0 0 1371 798" fill="none" stroke="#ff1f14" strokeWidth="3" strokeLinecap="round" strokeLinejoin="round" aria-hidden="true">
        <path d="M233 39L236 42L236 56L239 63L240 74L242 78V105" />
        <path d="M567 59Q575 57 583 61L589 67Q590 73 585 74L571 77L576 80L590 81L599 85H615" />
        <path d="M604 210.500H616L618 216L621 221L620 234L617 241H604L609 243L618 243L620 250L617 257L610 260H571" />
        <path d="M1119 319L1116 330L1112 342L1110 353L1108 366L1104 377V428M1104 336L1103 343L1098 352V359L1100 364H1115L1120 366" />
      </Markup>
    </App>
  );
}
